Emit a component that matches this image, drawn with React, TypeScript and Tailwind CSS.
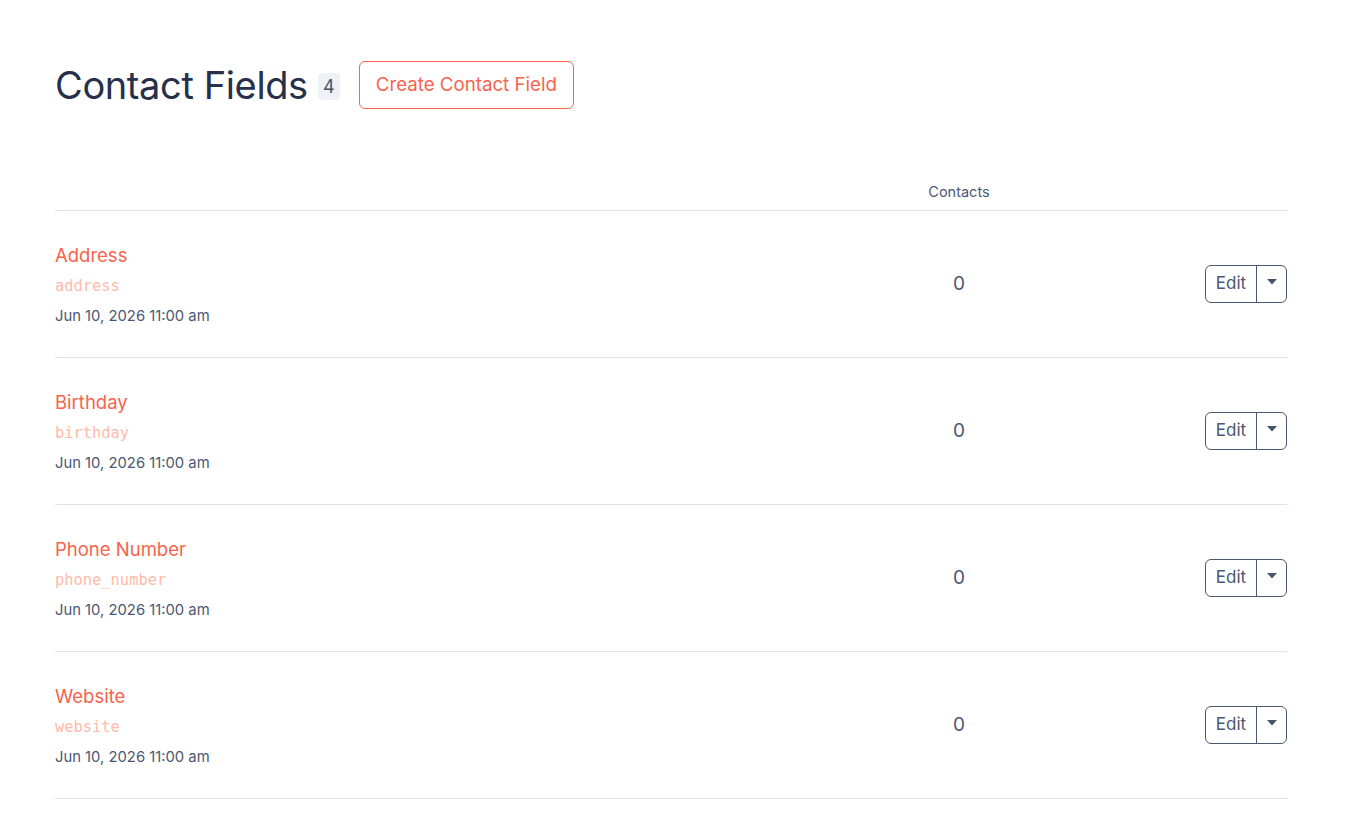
interface ContactField {
  name: string;
  key: string;
  createdAt: string;
  contacts: number;
}

const fields: ContactField[] = [
  { name: "Address", key: "address", createdAt: "Jun 10, 2026 11:00 am", contacts: 0 },
  { name: "Birthday", key: "birthday", createdAt: "Jun 10, 2026 11:00 am", contacts: 0 },
  { name: "Phone Number", key: "phone_number", createdAt: "Jun 10, 2026 11:00 am", contacts: 0 },
  { name: "Website", key: "website", createdAt: "Jun 10, 2026 11:00 am", contacts: 0 },
];

function Caret() {
  return (
    <svg width="10" height="6" viewBox="0 0 10 6" className="text-slate-600">
      <path d="M0 0h10L5 5.5z" fill="currentColor" />
    </svg>
  );
}

export default function App() {
  return (
    <div
      className="min-h-screen bg-white px-[55px] pt-[61px] text-slate-700"
      style={{ fontFamily: "Inter, 'Noto Sans', sans-serif" }}
    >
      <div className="flex items-center">
        <h1 className="text-[38px] leading-none font-normal tracking-[-0.01em] text-[#27304a]">
          Contact Fields
        </h1>
        <span className="ml-[10px] mt-[2px] flex h-[27px] w-[22px] items-center justify-center rounded-[4px] bg-[#eef2f7] text-[18px] text-slate-600">
          4
        </span>
        <button className="ml-[19px] h-[48px] rounded-[6px] border border-[#f7634d] px-[16px] text-[18.7px] text-[#f7634d]">
          Create Contact Field
        </button>
      </div>

      <div className="mt-[72px] w-[1232px]">
        <div className="grid grid-cols-[804px_200px_228px] border-b border-[#dbe3ec] pb-[7px]">
          <div />
          <div className="text-center text-[14.5px] text-[#4a5872]">Contacts</div>
          <div />
        </div>

        {fields.map((field) => (
          <div
            key={field.key}
            className="grid h-[147px] grid-cols-[804px_200px_228px] items-center border-b border-[#dbe3ec]"
          >
            <div className="flex flex-col">
              <span className="text-[18.5px] leading-[26px] text-[#f7634d]">{field.name}</span>
              <span
                className="mt-[7px] text-[15.4px] leading-[22px] text-[#ffbaa8]"
                style={{ fontFamily: "'DejaVu Sans Mono', monospace" }}
              >
                {field.key}
              </span>
              <span className="mt-[9px] text-[14.8px] leading-[20px] text-[#4a5872]">
                {field.createdAt}
              </span>
            </div>
            <div className="text-center text-[19px] text-[#4a5872]">{field.contacts}</div>
            <div className="flex justify-end">
              <div className="flex h-[38px] overflow-hidden rounded-[6px] border border-[#4a5872]">
                <button className="w-[51px] border-r border-[#4a5872] text-[17px] text-[#4a5872]">
                  Edit
                </button>
                <button className="flex w-[29px] items-center justify-center pb-[3px]">
                  <Caret />
                </button>
              </div>
            </div>
          </div>
        ))}
      </div>
    </div>
  );
}
